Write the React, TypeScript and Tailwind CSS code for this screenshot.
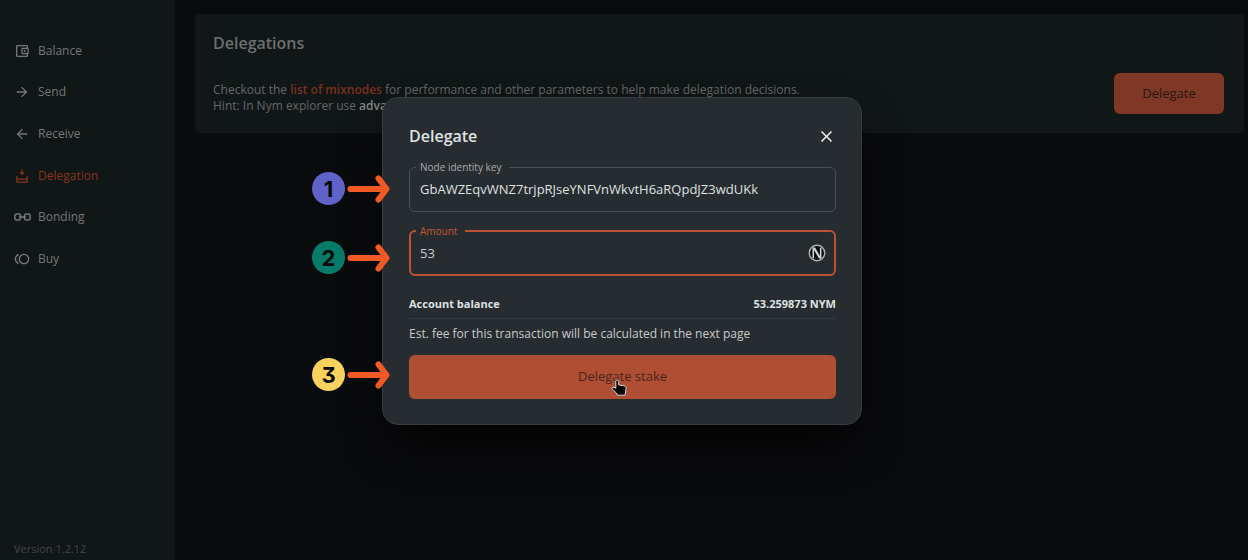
import type { ReactNode } from 'react';
import { MdArrowBack, MdArrowForward, MdClose, MdOutlineAccountBalanceWallet, MdToll } from 'react-icons/md';

function DelegationIcon() {
  return (
    <svg viewBox="0 0 12 14" className="h-[14px] w-3" fill="none" stroke="currentColor" strokeWidth="1.2">
      <path d="M6 0.5V5" />
      <path d="M3.8 3.4L6 5.8L8.2 3.4Z" fill="currentColor" strokeWidth="0.6" />
      <path d="M0.8 7V13.2H11.2V7M0.8 10.2H11.2" />
    </svg>
  );
}

function BondingIcon() {
  return (
    <svg viewBox="0 0 17 8" className="h-2 w-[17px]" fill="none" stroke="currentColor" strokeWidth="1.5">
      <rect x="0.9" y="1" width="5.6" height="6" rx="1.4" />
      <rect x="10.5" y="1" width="5.6" height="6" rx="1.4" />
      <path d="M5 4H12" />
    </svg>
  );
}

function NymIcon() {
  return (
    <svg viewBox="0 0 18 18" className="h-[18px] w-[18px]" fill="none">
      <circle cx="9" cy="9" r="7.7" fill="#0b0d0e" stroke="#b0b4b5" strokeWidth="1.4" />
      <path d="M5.3 14.2V3.8M12.7 3.8V14.2" stroke="#d5d8d9" strokeWidth="1.5" />
      <path d="M4.6 3.4H7L13.4 14.6H11Z" fill="#d5d8d9" />
    </svg>
  );
}

function HandCursor() {
  return (
    <svg viewBox="0 0 16 18" className="h-[18px] w-4" fill="#050606" stroke="#d5d8d8" strokeWidth="1" strokeLinejoin="round">
      <path d="M4.8 2.2C4.8 0.4 7.6 0.4 7.6 2.2V5.8L13 6.8C14.6 7.1 15.2 8 15.1 9.4L14.6 13L14 16.2H6.6L5.4 14L1.2 10.2C0.5 9.2 1.6 7.9 3 8.3L4.8 9.2Z" />
    </svg>
  );
}

const navItems: { label: string; icon: ReactNode; active?: boolean }[] = [
  { label: 'Balance', icon: <MdOutlineAccountBalanceWallet size={16} /> },
  { label: 'Send', icon: <MdArrowForward size={16} /> },
  { label: 'Receive', icon: <MdArrowBack size={16} /> },
  { label: 'Delegation', icon: <DelegationIcon />, active: true },
  { label: 'Bonding', icon: <BondingIcon /> },
  { label: 'Buy', icon: <MdToll size={16} /> },
];

function Sidebar() {
  return (
    <aside className="flex w-[175px] shrink-0 flex-col justify-between bg-[#111617] pt-[30px] pb-[3px]">
      <nav className="grid h-[250px] grid-rows-6">
        {navItems.map((item) => (
          <a
            key={item.label}
            href="#"
            className={`flex items-center gap-1.5 pl-3 text-xs ${item.active ? 'text-[#87351f]' : 'text-[#747879]'}`}
          >
            <span className="flex w-5 justify-center">{item.icon}</span>
            {item.label}
          </a>
        ))}
      </nav>
      <p className="pl-3.5 text-[11px] leading-4 text-[#414647]">Version 1.2.12</p>
    </aside>
  );
}

function DelegationsCard() {
  return (
    <section className="rounded bg-[#111617] px-[18px] pt-[17px] pb-[19px]">
      <h1 className="text-base leading-6 font-semibold text-[#6b6f70]">Delegations</h1>
      <div className="mt-[18px] flex items-end justify-between pr-0.5">
        <p className="text-xs leading-4 text-[#646869]">
          Checkout the{' '}
          <a href="#" className="font-semibold text-[#79301f]">
            list of mixnodes
          </a>{' '}
          for performance and other parameters to help make delegation decisions.
          <br />
          Hint: In Nym explorer use <b className="font-semibold text-[#85898a]">advanced filters</b> to narrow the list.
        </p>
        <button type="button" className="h-[41px] w-[110px] rounded-md bg-[#7f3826] text-[13px] font-medium text-[#2a1612]">
          Delegate
        </button>
      </div>
    </section>
  );
}

function StepMark({ step, color, top }: { step: number; color: string; top: string }) {
  return (
    <div className={`absolute -left-[71px] flex items-center gap-0.5 ${top}`}>
      <span
        className={`flex h-[33px] w-[33px] items-center justify-center rounded-full font-[Inter] text-[22px] leading-none font-bold text-[#08090b] [font-feature-settings:'cv09'] ${color}`}
      >
        {step}
      </span>
      <svg viewBox="0 0 44 28" className="h-7 w-11" fill="none" stroke="#f15a24" strokeWidth="6" strokeLinecap="round">
        <path d="M3.5 14H38" />
        <path d="M31.5 3.5L39.5 14L31.5 24.5" strokeLinejoin="round" />
      </svg>
    </div>
  );
}

function DelegateDialog() {
  return (
    <div
      role="dialog"
      aria-labelledby="dialog-title"
      className="relative w-[480px] rounded-2xl border border-[#363c3f] bg-[#262c2f] pt-[26px] pr-[25px] pb-[25px] pl-[26px] shadow-2xl shadow-black"
    >
      <header className="mb-3 flex h-6 items-center justify-between">
        <h2 id="dialog-title" className="text-base font-semibold text-[#dfe2e3]">
          Delegate
        </h2>
        <button type="button" aria-label="Close" className="text-[#eceeee]">
          <MdClose size={19} />
        </button>
      </header>

      <fieldset className="h-[52px] min-w-0 rounded-md border border-[#4a5053] pl-1.5">
        <legend className="h-3.5 pr-2 pl-1 text-[10px] leading-[14px] text-[#a9adae]">
          <label htmlFor="node-key">Node identity key</label>
        </legend>
        <input
          id="node-key"
          defaultValue="GbAWZEqvWNZ7trjpRJseYNFVnWkvtH6aRQpdJZ3wdUKk"
          className="block h-[30px] w-full bg-transparent pl-1 text-[13px] text-[#dfe2e3] outline-none"
        />
      </fieldset>

      <fieldset className="mt-3 h-[52px] min-w-0 rounded-md border-2 border-[#bb5333] pr-2 pl-[5px]">
        <legend className="h-3.5 pr-2 pl-1 text-[10px] leading-[14px] text-[#c4573a]">
          <label htmlFor="amount">Amount</label>
        </legend>
        <div className="flex h-[30px] items-center">
          <input
            id="amount"
            defaultValue="53"
            className="h-full min-w-0 flex-1 bg-transparent pl-1 text-[13px] text-[#c9cccd] outline-none"
          />
          <NymIcon />
        </div>
      </fieldset>

      <div className="mt-4 flex h-[27px] items-start justify-between border-b border-[#33393c] text-[11px] leading-6 font-bold text-[#dfe2e3]">
        <span>Account balance</span>
        <span>53.259873 NYM</span>
      </div>
      <p className="mb-1.5 text-xs leading-[30px] text-[#c9cccd]">
        Est. fee for this transaction will be calculated in the next page
      </p>
      <div className="relative">
        <button type="submit" className="h-11 w-full rounded-md bg-[#ae4f33] text-[13px] font-medium text-[#4b231b]">
          Delegate stake
        </button>
        <span className="pointer-events-none absolute top-6 left-1/2 -ml-3">
          <HandCursor />
        </span>
      </div>

      <StepMark step={1} color="bg-[#5f62c6]" top="top-[74px]" />
      <StepMark step={2} color="bg-[#087a68]" top="top-[143px]" />
      <StepMark step={3} color="bg-[#f8d25c]" top="top-[260px]" />
    </div>
  );
}

export default function App() {
  return (
    <div className="relative flex min-h-screen bg-[#0a0b0d] font-['Open_Sans',sans-serif]">
      <Sidebar />
      <main className="min-w-0 flex-1 pt-3.5 pr-1 pl-5">
        <DelegationsCard />
      </main>
      <div className="absolute inset-0 flex items-start justify-center pt-[97px] pr-1">
        <DelegateDialog />
      </div>
    </div>
  );
}
